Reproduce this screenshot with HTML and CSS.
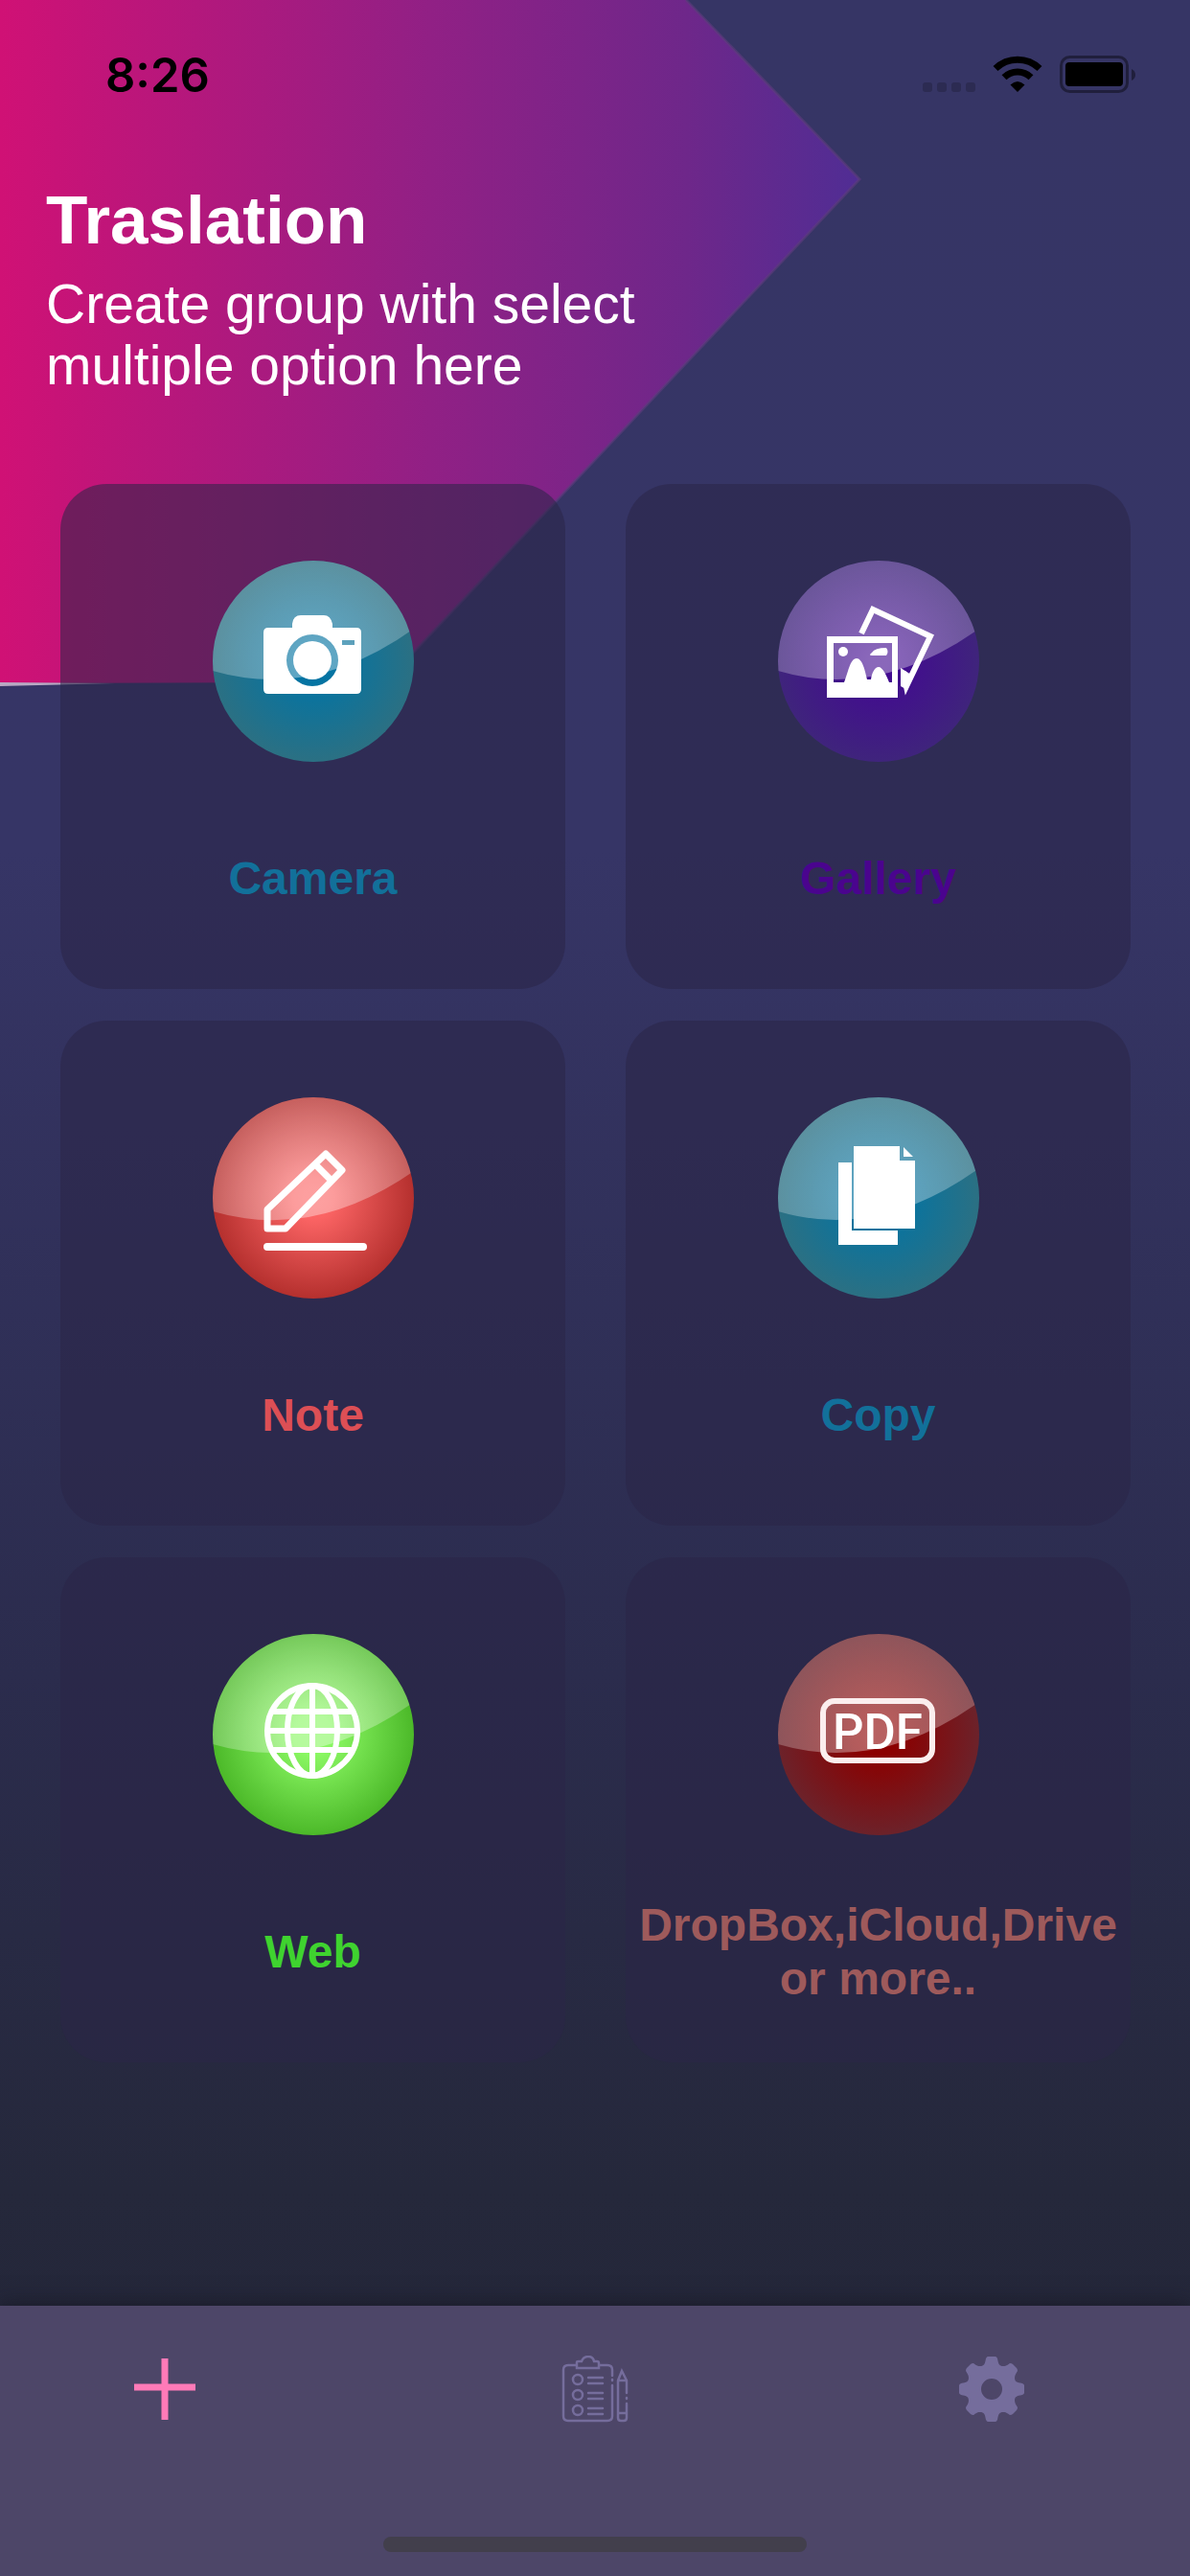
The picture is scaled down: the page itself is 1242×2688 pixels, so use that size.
FILE: index.html
```html
<!DOCTYPE html>
<html lang="en">
<head>
    <meta charset="UTF-8">
    <meta name="viewport" content="width=device-width, initial-scale=1.0">
    <title>Traslation</title>
    <link rel="stylesheet" href="styles.css">
</head>
<body>
    <!-- Pink arrow behind the header -->
    <svg class="backdrop" viewBox="0 0 900 720" aria-hidden="true">
        <defs>
            <linearGradient id="arrow" x1="0" y1="0" x2="1" y2="0">
                <stop offset="0" stop-color="#d01175"/>
                <stop offset="0.5" stop-color="#912085"/>
                <stop offset="0.8" stop-color="#6e278a"/>
                <stop offset="1" stop-color="#502d94"/>
            </linearGradient>
            <!-- Gloss shared by all the round icons -->
            <radialGradient id="shine" gradientUnits="userSpaceOnUse" cx="105" cy="105" r="105">
                <stop offset="0.1" stop-color="#fff" stop-opacity="0.38"/>
                <stop offset="1" stop-color="#fff" stop-opacity="0.23"/>
            </radialGradient>
        </defs>
        <path d="M0 0H716L897 187L402 712L0 713Z" fill="url(#arrow)"/>
        <path d="M716 0L897 187L402 712" fill="none" stroke="#5d3c7d" stroke-opacity="0.6" stroke-width="3"/>
        <path d="M0 712L120 713L0 716Z" fill="#b9a9c4"/>
    </svg>

    <div class="status-bar">
        <span class="time">8:26</span>
        <div class="status-icons">
            <svg width="55" height="40" viewBox="0 0 55 40" fill="#2c2b52" aria-hidden="true">
                <rect x="0" y="28" width="10" height="10" rx="3"/>
                <rect x="15" y="28" width="10" height="10" rx="3"/>
                <rect x="30" y="28" width="10" height="10" rx="3"/>
                <rect x="45" y="28" width="10" height="10" rx="3"/>
            </svg>
            <svg width="52" height="40" viewBox="0 0 52 40" aria-hidden="true">
                <g fill="none" stroke="#000" stroke-width="7">
                    <path d="M3 13.500A33 33 0 0 1 49 13.500"/>
                    <path d="M12 22.800A20 20 0 0 1 40 22.800"/>
                </g>
                <path d="M26 38L18.500 30.500Q26 23.500 33.500 30.500Z"/>
            </svg>
            <svg width="80" height="40" viewBox="0 0 80 40" aria-hidden="true">
                <rect x="1.500" y="1.500" width="69" height="36" rx="9" fill="none" stroke="#201f3c" stroke-width="3"/>
                <rect x="6" y="7" width="60" height="25" rx="4"/>
                <path d="M75 14Q79 16 79 20T75 26Z" fill="#201f3c"/>
            </svg>
        </div>
    </div>

    <header class="header">
        <h1>Traslation</h1>
        <p>Create group with select multiple option here</p>
    </header>

    <main class="grid">
        <button class="card camera">
            <span class="bubble">
                <svg viewBox="0 0 210 210" aria-hidden="true">
                    <path fill="url(#shine)" d="M0 0H210V71Q105 146 0 115Z"/>
                    <path fill="#fff" fill-rule="evenodd" d="M58 70H83V66Q84 57 92 57H116Q123 57 125 66V70H150Q155 70 155 75V134Q155 139 150 139H58Q53 139 53 134V75Q53 70 58 70ZM104 77A27 27 0 1 0 104 131A27 27 0 1 0 104 77ZM135 83V88H148V83Z"/>
                    <circle cx="104" cy="104" r="20" fill="#fff"/>
                </svg>
            </span>
            <span class="label">Camera</span>
        </button>

        <button class="card gallery">
            <span class="bubble">
                <svg viewBox="0 0 210 210" aria-hidden="true">
                    <path fill="url(#shine)" d="M0 0H210V71Q105 146 0 115Z"/>
                    <path d="M87 76L99 51L159 79L134 131L131 116" fill="none" stroke="#fff" stroke-width="6"/>
                    <path d="M128 112L139 119L142 117L135 135L128 131Z" fill="#fff"/>
                    <path fill="#fff" fill-rule="evenodd" d="M51 79H125V143H51ZM58 86V127H69C73 118 75 102 82 102C88 102 91 115 93 124H97C98 117 101 111 105 111C109 111 113 119 116 127H119V86Z"/>
                    <circle cx="68" cy="95" r="5" fill="#fff"/>
                    <path d="M98 96Q101 91 113 91Q116 95 113 99H98Q94 99 98 96Z" fill="#fff"/>
                </svg>
            </span>
            <span class="label">Gallery</span>
        </button>

        <button class="card note">
            <span class="bubble">
                <svg viewBox="0 0 210 210" aria-hidden="true">
                    <path fill="url(#shine)" d="M0 0H210V77Q105 150 0 119Z"/>
                    <g fill="none" stroke="#fff" stroke-width="7" stroke-linejoin="round" stroke-linecap="round">
                        <path d="M118 59L135 76L76 137H57V117ZM108 71L123 86"/>
                        <path d="M57 156H157" stroke-width="8"/>
                    </g>
                </svg>
            </span>
            <span class="label">Note</span>
        </button>

        <button class="card copy">
            <span class="bubble">
                <svg viewBox="0 0 210 210" aria-hidden="true">
                    <path fill="url(#shine)" d="M0 0H210V74Q105 150 0 119Z"/>
                    <path d="M63 68H77V139H125V154H63Z" fill="#fff"/>
                    <path d="M79 51H127V66H143V137H79ZM131 52L141 62H131Z" fill="#fff"/>
                </svg>
            </span>
            <span class="label">Copy</span>
        </button>

        <button class="card web">
            <span class="bubble">
                <svg viewBox="0 0 210 210" aria-hidden="true">
                    <path fill="url(#shine)" d="M0 0H210V71Q105 146 0 115Z"/>
                    <g fill="none" stroke="#fff" stroke-width="6">
                        <circle cx="104" cy="101" r="47"/>
                        <ellipse cx="104" cy="101" rx="26" ry="47"/>
                        <path d="M104 54V148M57 101H151M62 81H146M62 121H146"/>
                    </g>
                </svg>
            </span>
            <span class="label">Web</span>
        </button>

        <button class="card cloud">
            <span class="bubble">
                <svg viewBox="0 0 210 210" aria-hidden="true">
                    <path fill="url(#shine)" d="M0 0H210V71Q105 146 0 115Z"/>
                    <rect x="47" y="70" width="114" height="62" rx="12" fill="none" stroke="#fbeeee" stroke-width="6"/>
                    <text x="104" y="120" text-anchor="middle">PDF</text>
                </svg>
            </span>
            <span class="label">DropBox,iCloud,Drive or more..</span>
        </button>
    </main>

    <nav class="tab-bar">
        <a class="tab tab-add" href="#add" aria-label="Add">
            <svg viewBox="0 0 70 70" aria-hidden="true">
                <path d="M35 3V67M3 33H67" stroke="#ff7ab8" stroke-width="7"/>
            </svg>
        </a>
        <a class="tab" href="#list" aria-label="List">
            <svg viewBox="0 0 70 70" fill="none" stroke="#756d9c" stroke-width="2.500" stroke-linecap="round" aria-hidden="true">
                <path d="M15 10H7Q2 10 2 15V63Q2 68 7 68H48Q53 68 53 63V31M53 21V15Q53 10 48 10H40M53 25V26"/>
                <path d="M16 13V7Q16 6 18 6H21Q23 1 28 1T34 6H37Q39 6 39 8V13Z"/>
                <circle cx="17" cy="25" r="5"/>
                <circle cx="17" cy="41" r="5"/>
                <circle cx="17" cy="57" r="5"/>
                <path d="M28 23H43M28 29H43M28 39H43M28 45H43M28 55H43M28 61H43"/>
                <path d="M59 26L63 16L68 26V39M59 26V65Q59 68 62 68H65Q68 68 68 65V50M59 26H68M59 60H68M68 44V45"/>
            </svg>
        </a>
        <a class="tab" href="#settings" aria-label="Settings">
            <svg viewBox="0 0 70 70" aria-hidden="true">
                <path fill="#756d9c" fill-rule="evenodd" d="M31 1H39Q40 1 41 3C42 9 43 11 47 11C51 11 52 9 54 8Q56 8 57 9L61 13Q62 14 62 16C61 18 59 20 59 23C59 27 61 28 67 29Q69 30 69 31V39Q69 40 67 41C61 42 59 43 59 47C59 50 61 52 62 54Q62 56 61 57L57 61Q56 62 54 62C52 61 51 59 47 59C43 59 42 61 41 67Q40 69 39 69H31Q30 69 29 67C28 61 27 59 23 59C19 59 18 61 16 62Q14 62 13 61L9 57Q8 56 8 54C9 52 11 50 11 47C11 43 9 42 3 41Q1 40 1 39V31Q1 30 3 29C9 28 11 27 11 23C11 20 9 18 8 16Q8 14 9 13L13 9Q14 8 16 8C18 9 19 11 23 11C27 11 28 9 29 3Q30 1 31 1ZM35 24A11 11 0 1 0 35 46A11 11 0 1 0 35 24Z"/>
            </svg>
        </a>
        <span class="home-indicator"></span>
    </nav>
</body>
</html>
```

FILE: styles.css
```css
* {
    box-sizing: border-box;
}
body {
    position: relative;
    display: flex;
    flex-direction: column;
    min-height: 100vh;
    margin: 0;
    font-family: "Arial Rounded MT Bold", "Liberation Sans", Arial, sans-serif;
    background: linear-gradient(#363565 0%, #363566 33%, #2b2c4d 65%, #25283b 85%, #232538 100%);
}
.backdrop {
    position: absolute;
    top: 0;
    left: 0;
    width: 900px;
    height: 720px;
    z-index: -1;
}

/* Status bar */
.status-bar {
    display: flex;
    justify-content: space-between;
    align-items: center;
    height: 156px;
    padding: 0 56px 0 110px;
}
.time {
    font-family: Inter, "Liberation Sans", sans-serif;
    font-size: 49px;
    font-weight: 600;
    color: #000;
}
.status-icons {
    display: flex;
    gap: 18px;
}
.status-icons svg {
    display: block;
}

/* Header */
.header {
    padding: 32px 48px 0;
    color: #fff;
}
.header h1 {
    margin: 0 0 13px;
    font-size: 71px;
    line-height: 84px;
}
.header p {
    max-width: 680px;
    margin: 0;
    font-size: 57px;
    line-height: 64px;
}

/* Option cards */
.grid {
    display: grid;
    grid-template-columns: 1fr 1fr;
    gap: 33px 63px;
    padding: 92px 62px 92px 63px;
}
.card {
    display: flex;
    flex-direction: column;
    align-items: center;
    aspect-ratio: 1;
    padding: 80px 0 0;
    border: 0;
    border-radius: 48px;
    background: rgba(43, 37, 71, 0.56);
    font-family: inherit;
    cursor: pointer;
}
.bubble {
    width: 210px;
    height: 210px;
    border-radius: 50%;
    overflow: hidden;
    background: radial-gradient(circle closest-side, var(--inner) 20%, var(--outer) 100%);
}
.bubble svg {
    display: block;
    width: 100%;
}
.bubble text {
    font-family: Roboto, "Liberation Sans", sans-serif;
    font-size: 51px;
    font-weight: 500;
    fill: #fff;
}
.label {
    display: flex;
    align-items: center;
    height: 112px;
    margin-top: 66px;
    font-size: 48px;
    font-weight: bold;
    line-height: 56px;
    color: var(--text);
}
.camera, .copy {
    --inner: #0474a3;
    --outer: #2b7083;
    --text: #12709a;
}
.gallery {
    --inner: #420b90;
    --outer: #3f247c;
    --text: #4a048e;
}
.note {
    --inner: #fb6464;
    --outer: #b5302e;
    --text: #dd4f55;
}
.web {
    --inner: #8af763;
    --outer: #4cb929;
    --text: #3fd32f;
}
.cloud {
    --inner: #8b0000;
    --outer: #6c222a;
    --text: #9e5a5b;
}

/* Bottom tabs */
.tab-bar {
    position: relative;
    display: grid;
    grid-template-columns: repeat(3, 1fr);
    align-items: start;
    height: 282px;
    margin-top: auto;
    padding-top: 52px;
    background: #4d4668;
    box-shadow: 0 -2px 20px rgba(20, 20, 30, 0.6);
}
.tab {
    display: flex;
    justify-content: center;
}
.tab-add {
    padding-right: 70px;
}
.tab svg {
    width: 70px;
    height: 70px;
}
.home-indicator {
    position: absolute;
    bottom: 25px;
    left: 50%;
    width: 442px;
    height: 16px;
    margin-left: -221px;
    border-radius: 8px;
    background: #423f4c;
}
```
